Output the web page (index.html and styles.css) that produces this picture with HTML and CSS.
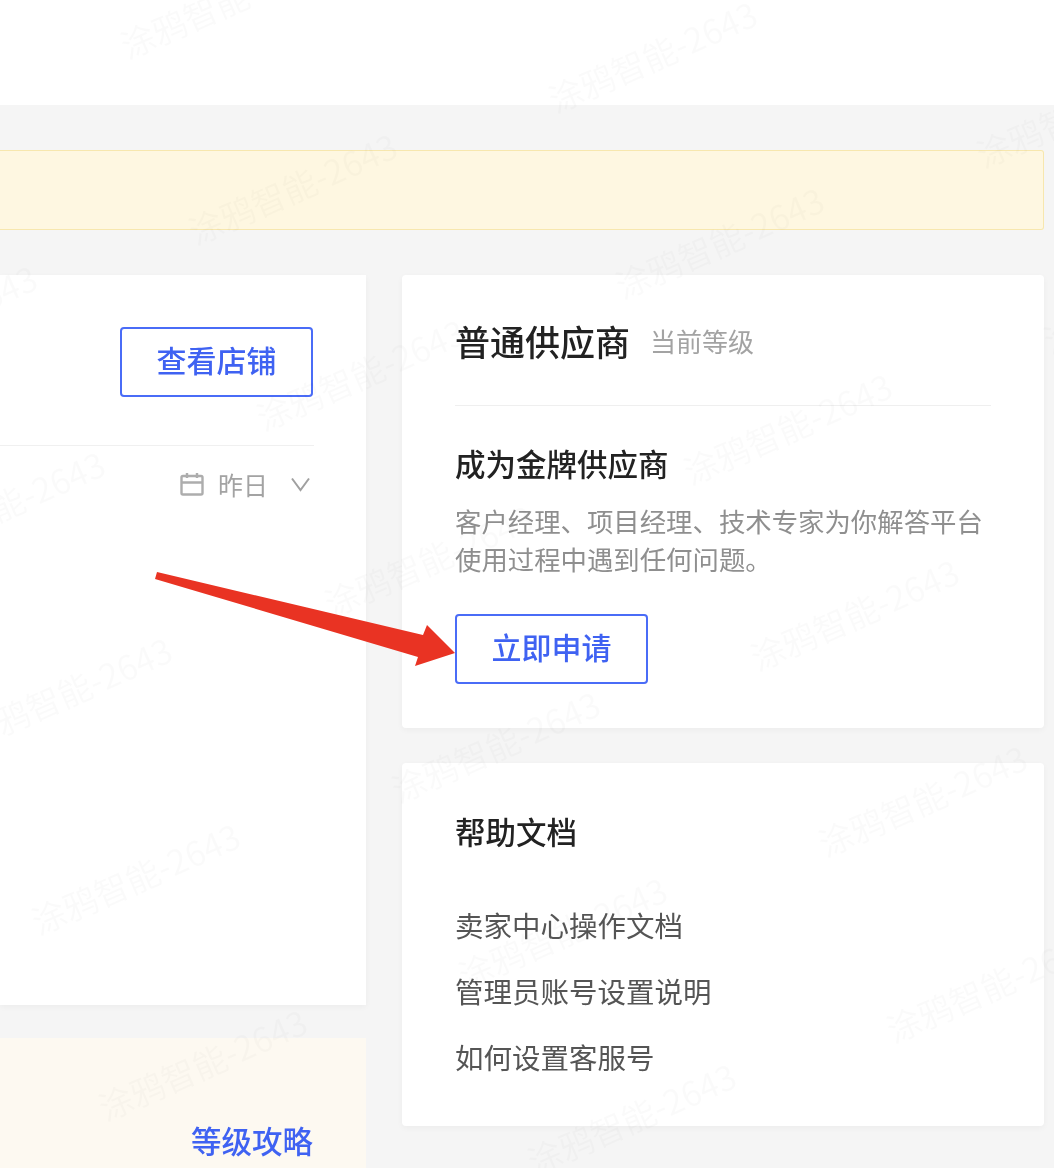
FILE: index.html
```html
<!DOCTYPE html>
<html lang="zh-CN">
    <head>
        <meta charset="UTF-8">
        <meta name="viewport" content="width=device-width, initial-scale=1.0">
        <title>卖家中心</title>
        <link rel="stylesheet" href="styles.css">
    </head>
    <body>
        <div class="page">
            <!-- Barre du haut -->
            <div class="top-bar"></div>

            <div class="content">
                <div class="notice"></div>

                <div class="columns">
                    <!-- Colonne de gauche -->
                    <div class="left-col">
                        <div class="card shop-card">
                            <div class="shop-head">
                                <a class="outline-btn">查看店铺</a>
                            </div>
                            <div class="date-filter">
                                <svg class="date-icon" viewBox="0 0 24 24" fill="none" stroke="#adadad" stroke-width="2.4">
                                    <rect x="1.5" y="4" width="21" height="18.5" rx="1.5"/>
                                    <path d="M1.5 10.5h21M7 1v5M17 1v5"/>
                                </svg>
                                <span class="date-label">昨日</span>
                                <svg class="date-arrow" viewBox="0 0 19 15" fill="none" stroke="#a0a0a0" stroke-width="2">
                                    <path d="M1 1.5l8.5 11.5L18 1.5"/>
                                </svg>
                            </div>
                        </div>
                        <div class="level-card">
                            <a class="level-link">等级攻略</a>
                        </div>
                    </div>

                    <!-- Colonne de droite -->
                    <div class="right-col">
                        <div class="card grade-card">
                            <div class="grade-head">
                                <span class="grade-name">普通供应商</span>
                                <span class="grade-tag">当前等级</span>
                            </div>
                            <h3 class="card-title">成为金牌供应商</h3>
                            <p class="grade-desc">客户经理、项目经理、技术专家为你解答平台使用过程中遇到任何问题。</p>
                            <a class="outline-btn">立即申请</a>
                        </div>
                        <div class="card help-card">
                            <h3 class="card-title">帮助文档</h3>
                            <ul class="help-list">
                                <li>卖家中心操作文档</li>
                                <li>管理员账号设置说明</li>
                                <li>如何设置客服号</li>
                            </ul>
                        </div>
                    </div>
                </div>
            </div>

            <!-- Filigrane -->
            <svg class="watermarks" width="1054" height="1168" viewBox="0 0 1054 1168">
                <g text-anchor="middle" transform="translate(6 6)">
                    <text transform="translate(-68 327) rotate(-23.7)">涂鸦智能-2643</text>
                    <text transform="translate(0 513) rotate(-23.7)">涂鸦智能-2643</text>
                    <text transform="translate(67 699) rotate(-23.7)">涂鸦智能-2643</text>
                    <text transform="translate(135 885) rotate(-23.7)">涂鸦智能-2643</text>
                    <text transform="translate(202 1071) rotate(-23.7)">涂鸦智能-2643</text>
                    <text transform="translate(224 9) rotate(-23.7)">涂鸦智能-2643</text>
                    <text transform="translate(292 195) rotate(-23.7)">涂鸦智能-2643</text>
                    <text transform="translate(360 381) rotate(-23.7)">涂鸦智能-2643</text>
                    <text transform="translate(428 567) rotate(-23.7)">涂鸦智能-2643</text>
                    <text transform="translate(495 753) rotate(-23.7)">涂鸦智能-2643</text>
                    <text transform="translate(562 939) rotate(-23.7)">涂鸦智能-2643</text>
                    <text transform="translate(631 1125) rotate(-23.7)">涂鸦智能-2643</text>
                    <text transform="translate(652 63) rotate(-23.7)">涂鸦智能-2643</text>
                    <text transform="translate(719 249) rotate(-23.7)">涂鸦智能-2643</text>
                    <text transform="translate(787 435) rotate(-23.7)">涂鸦智能-2643</text>
                    <text transform="translate(854 621) rotate(-23.7)">涂鸦智能-2643</text>
                    <text transform="translate(922 807) rotate(-23.7)">涂鸦智能-2643</text>
                    <text transform="translate(990 993) rotate(-23.7)">涂鸦智能-2643</text>
                    <text transform="translate(1080 118) rotate(-23.7)">涂鸦智能-2643</text>
                    <text transform="translate(1147 304) rotate(-23.7)">涂鸦智能-2643</text>
                </g>
            </svg>

            <!-- Flèche rouge -->
            <svg class="red-arrow" width="1054" height="1168" viewBox="0 0 1054 1168">
                <polygon points="157,572 423,635 427,625 455,653 415,666 418,657 155,579" fill="#e93323"/>
            </svg>
        </div>
    </body>
</html>
```

FILE: styles.css
```css
/* Style global */
body, html {
    margin: 0;
    padding: 0;
    background-color: #ffffff;
    font-family: "Noto Sans CJK SC", "Noto Sans", sans-serif;
    overflow: hidden;
}

.page {
    position: relative;
    width: 1054px;
    height: 1168px;
    overflow: hidden;
    background-color: #f5f5f5;
    filter: blur(0.7px);
}

.top-bar {
    height: 105px;
    background-color: #ffffff;
}

.content {
    padding: 45px 10px 0 0;
}

/* Bandeau jaune */
.notice {
    height: 78px;
    background-color: #fef7e1;
    border: 1.5px solid #f7e7ae;
    border-left: 0;
    border-radius: 0 3px 3px 0;
}

.columns {
    display: flex;
    gap: 36px;
    margin-top: 45px;
}

.left-col {
    width: 366px;
    flex-shrink: 0;
}

.right-col {
    flex-grow: 1;
}

.card {
    background-color: #ffffff;
    box-shadow: 0 2px 6px rgba(0, 0, 0, 0.04);
}

/* Boutons bleus */
.outline-btn {
    display: flex;
    align-items: center;
    justify-content: center;
    box-sizing: border-box;
    width: 193px;
    height: 70px;
    padding-bottom: 7px;
    border: 2px solid #4a6cf7;
    border-radius: 4px;
    color: #3f62f2;
    font-size: 30px;
    font-weight: 500;
}

/* Carte boutique */
.shop-card {
    height: 730px;
    padding: 52px 52px 0 0;
    box-sizing: border-box;
}

.shop-head {
    display: flex;
    justify-content: flex-end;
    padding: 0 1px 48px 0;
    border-bottom: 1.5px solid #f0f0f0;
}

.date-filter {
    display: flex;
    align-items: center;
    justify-content: flex-end;
    height: 40px;
    margin-top: 18px;
    padding-right: 4px;
}

.date-icon {
    width: 24px;
    height: 24px;
}

.date-label {
    margin: 0 23px 0 14px;
    color: #a3a3a3;
    font-size: 25px;
}

.date-arrow {
    width: 19px;
    height: 15px;
}

.level-card {
    display: flex;
    justify-content: flex-end;
    height: 160px;
    margin-top: 33px;
    padding: 81px 53px 0 0;
    box-sizing: border-box;
    background-color: #fdf9f1;
}

.level-link {
    color: #3f62f2;
    font-size: 30.5px;
    font-weight: 500;
    line-height: 42px;
}

/* Carte niveau */
.grade-card {
    height: 453px;
    padding: 43px 53px 0;
    box-sizing: border-box;
    border-radius: 4px;
}

.grade-head {
    display: flex;
    align-items: center;
    gap: 20px;
    height: 44px;
    padding-bottom: 43px;
    border-bottom: 1.5px solid #efefef;
}

.grade-name {
    color: #222222;
    font-size: 35px;
    font-weight: 500;
}

.grade-tag {
    color: #a3a3a3;
    font-size: 26px;
}

.card-title {
    margin: 37px 0 0;
    color: #222222;
    font-size: 30.5px;
    font-weight: 500;
    line-height: 40px;
}

.grade-desc {
    margin: 19px 0 36px;
    color: #8f8f8f;
    font-size: 26.4px;
    line-height: 38px;
}

/* Carte aide */
.help-card {
    height: 363px;
    margin-top: 35px;
    padding: 11px 53px 0;
    box-sizing: border-box;
    border-radius: 4px;
}

.help-list {
    margin: 41px 0 0;
    padding: 0;
    list-style: none;
    color: #555555;
    font-size: 28.5px;
    line-height: 66px;
}

/* Calques au-dessus de la page */
.watermarks {
    position: absolute;
    top: 0;
    left: 0;
    font-size: 34px;
    fill: rgba(0, 0, 0, 0.018);
    pointer-events: none;
}

.red-arrow {
    position: absolute;
    top: 0;
    left: 0;
    pointer-events: none;
}
```
